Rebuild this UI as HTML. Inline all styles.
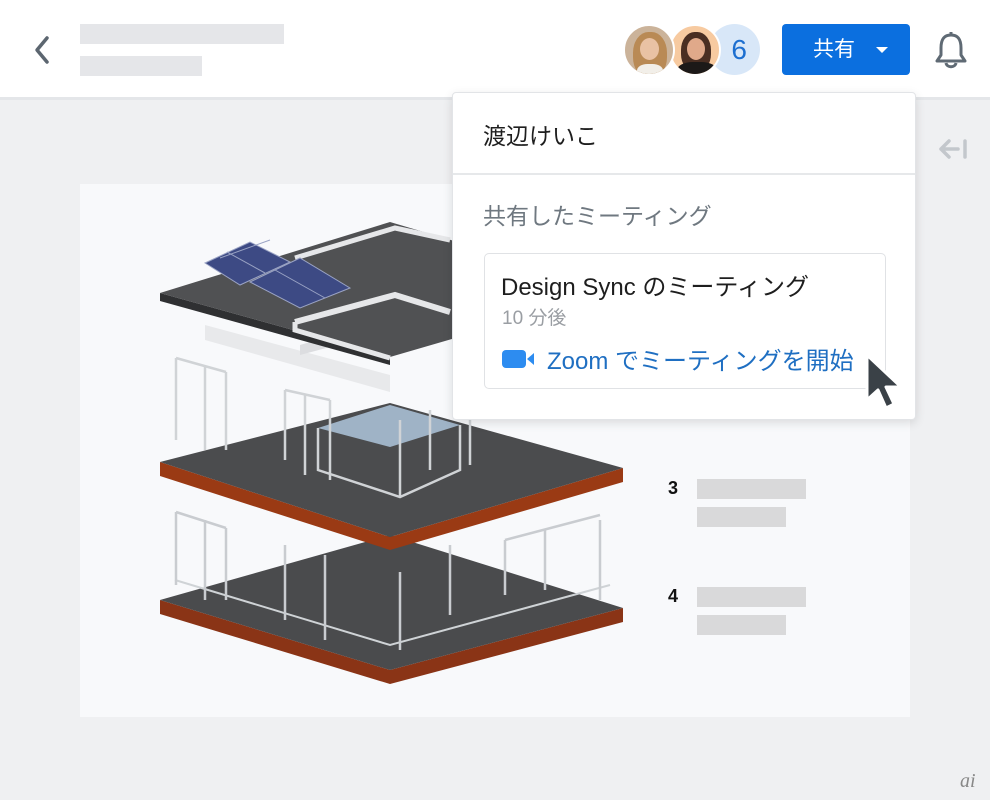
<!DOCTYPE html>
<html><head><meta charset="utf-8"><style>
*{margin:0;padding:0;box-sizing:border-box}
body{width:990px;height:800px;overflow:hidden;background:#eff0f2;font-family:"Liberation Sans","Noto Sans CJK JP",sans-serif;position:relative}
.abs{position:absolute}
.hdr{left:0;top:0;width:990px;height:100px;background:#fff;border-bottom:3px solid #e4e6e9}
.ph{background:#e5e6e9}
.card{left:80px;top:184px;width:830px;height:533px;background:#f8f9fb}
.pop{left:452px;top:92px;width:464px;height:328px;background:#fff;border:1px solid #e2e4e7;border-radius:4px;box-shadow:0 3px 10px rgba(0,0,0,.12)}
.gb{background:#d9d9da}
</style></head><body>
<div class="abs hdr"></div>
<svg class="abs" style="left:30px;top:34px" width="24" height="32"><path d="M17 4 L7 16 L17 28" stroke="#5c6670" stroke-width="3.5" fill="none" stroke-linecap="round" stroke-linejoin="round"/></svg>
<div class="abs ph" style="left:80px;top:24px;width:204px;height:20px"></div>
<div class="abs ph" style="left:80px;top:56px;width:122px;height:20px"></div>
<div class="abs" style="left:709px;top:24px;width:51px;height:51px;border-radius:50%;background:#d8e7f8;color:#1d6fd0;font-size:28px;line-height:51px;text-align:right;padding-right:13px">6</div>
<div class="abs" style="left:669px;top:24px;width:52px;height:52px;border-radius:50%;background:#f7caa0;border:2px solid #fff;overflow:hidden"><div style="position:absolute;left:10px;top:6px;width:30px;height:40px;border-radius:45%;background:#4a2e22"></div><div style="position:absolute;left:16px;top:12px;width:18px;height:22px;border-radius:50%;background:#e0a98a"></div><div style="position:absolute;left:6px;top:36px;width:40px;height:20px;border-radius:40%;background:#1c1918"></div></div>
<div class="abs" style="left:623px;top:24px;width:52px;height:52px;border-radius:50%;background:#cbb39a;border:2px solid #fff;overflow:hidden"><div style="position:absolute;left:8px;top:6px;width:34px;height:46px;border-radius:45%;background:#b98a55"></div><div style="position:absolute;left:15px;top:12px;width:19px;height:22px;border-radius:50%;background:#e9c2a4"></div><div style="position:absolute;left:12px;top:38px;width:26px;height:16px;background:#f2efe9;border-radius:40%"></div></div>
<div class="abs" style="left:782px;top:24px;width:128px;height:51px;background:#0b6fdf;border-radius:4px;color:#fff;font-size:21px;line-height:51px;padding-left:31px">共有</div>
<svg class="abs" style="left:874px;top:45px" width="16" height="10"><path d="M2 2 L14 2 L8 8 Z" fill="#fff"/></svg>
<svg class="abs" style="left:932px;top:30px" width="38" height="42"><path d="M19 5 C11 5 9 11 9 18 L9 25 L5 31 L33 31 L29 25 L29 18 C29 11 27 5 19 5 Z" fill="none" stroke="#5f6a74" stroke-width="3" stroke-linejoin="round"/><path d="M14 33 C15 38 23 38 24 33" fill="none" stroke="#5f6a74" stroke-width="3"/><path d="M19 2 L19 5" stroke="#5f6a74" stroke-width="3"/></svg>
<svg class="abs" style="left:938px;top:138px" width="32" height="22"><path d="M11 3 L3 11 L11 19 M3 11 L20 11 M27 3 L27 19" stroke="#c3c7cc" stroke-width="3.5" fill="none" stroke-linecap="round" stroke-linejoin="round"/></svg>
<div class="abs card"></div>
<svg class="abs" style="left:0;top:0" width="990" height="800">
<polygon points="160,600 390,670 623,608 623,622 390,684 160,614" fill="#8a3416"/>
<polygon points="160,600 390,535 623,608 390,670" fill="#4a4b4d"/>
<polyline points="175,580 390,645 610,585" fill="none" stroke="#cfd3d6" stroke-width="2"/>
<g stroke="#c9ccd0" stroke-width="2.5" fill="none">
<path d="M176 512 L176 585 M205 520 L205 600 M226 528 L226 600 M285 545 L285 620 M325 555 L325 640 M400 572 L400 650 M450 545 L450 615 M505 540 L505 595 M545 530 L545 590 M600 520 L600 600 M176 512 L226 528 M505 540 L600 515"/>
</g>
<polygon points="160,462 390,537 623,468 623,482 390,550 160,476" fill="#9a3a14"/>
<polygon points="160,462 390,403 623,468 390,537" fill="#4b4c4e"/>
<polygon points="318,428 390,405 460,425 390,447" fill="#a9bfd4" opacity=".9"/>
<g stroke="#d0d3d6" stroke-width="2.5" fill="none">
<path d="M176 358 L176 440 M205 365 L205 450 M226 372 L226 450 M285 390 L285 460 M305 395 L305 475 M330 400 L330 480 M400 420 L400 497 M430 410 L430 470 M470 400 L470 465 M176 358 L226 372 M285 390 L330 400 M318 428 L318 470 L400 497 L460 470 L460 425"/>
</g>
<polygon points="205,325 390,375 390,392 205,340" fill="#e8e9eb"/>
<polygon points="300,345 450,300 450,315 300,355" fill="#dcdde0"/>
<polygon points="160,293 390,357 390,365 160,301" fill="#2f3032"/>
<polygon points="160,293 390,222 620,290 390,357" fill="#505153"/>
<polyline points="295,322 395,295 450,312" fill="none" stroke="#e6e7e9" stroke-width="6"/>
<polyline points="295,322 295,330 390,358" fill="none" stroke="#e6e7e9" stroke-width="5"/>
<polyline points="295,258 395,228 450,240" fill="none" stroke="#e6e7e9" stroke-width="5"/>
<polygon points="205,263 250,242 290,262 240,285" fill="#3d4a84" stroke="#9aa3c4" stroke-width="1"/>
<polygon points="250,282 300,258 350,288 300,308" fill="#3d4a84" stroke="#9aa3c4" stroke-width="1"/>
<path d="M227 252 L265 273 M275 270 L325 298 M220 258 L270 240" stroke="#9aa3c4" stroke-width="1"/>
</svg>
<div class="abs" style="left:668px;top:478px;font-size:18px;font-weight:bold;color:#111">3</div>
<div class="abs gb" style="left:697px;top:479px;width:109px;height:20px"></div>
<div class="abs gb" style="left:697px;top:507px;width:89px;height:20px"></div>
<div class="abs" style="left:668px;top:586px;font-size:18px;font-weight:bold;color:#111">4</div>
<div class="abs gb" style="left:697px;top:587px;width:109px;height:20px"></div>
<div class="abs gb" style="left:697px;top:615px;width:89px;height:20px"></div>
<div class="abs pop">
 <div class="abs" style="left:30px;top:24px;font-size:23px;color:#1e1e1e">渡辺けいこ</div>
 <div class="abs" style="left:0;top:80px;width:462px;height:2px;background:#e6e8ea"></div>
 <div class="abs" style="left:30px;top:104px;font-size:23px;color:#6f7880;white-space:nowrap">共有したミーティング</div>
 <div class="abs" style="left:31px;top:160px;width:402px;height:136px;border:1.5px solid #e0e2e5;border-radius:5px">
  <div class="abs" style="left:16px;top:13px;font-size:24px;color:#1e1e1e;white-space:nowrap">Design Sync のミーティング</div>
  <div class="abs" style="left:17px;top:49px;font-size:19px;color:#9a9ea3">10 分後</div>
  <svg class="abs" style="left:17px;top:96px" width="34" height="18"><rect x="0" y="0" width="24" height="18" rx="4" fill="#2d8cf0"/><path d="M25 9 L32 3 L32 15 Z" fill="#2d8cf0"/></svg>
  <div class="abs" style="left:62px;top:87px;font-size:24px;color:#1f6fc2;white-space:nowrap">Zoom でミーティングを開始</div>
 </div>
</div>
<svg class="abs" style="left:862px;top:352px" width="46" height="64"><path d="M5 3 L5 48 L16 38 L24 56 L32 52 L24 35 L39 35 Z" fill="#3a4147" stroke="#fff" stroke-width="3" stroke-linejoin="round"/></svg>
<div class="abs" style="left:960px;top:770px;font-size:20px;font-style:italic;color:#888;font-family:'Liberation Serif',serif">ai</div>
</body></html>
